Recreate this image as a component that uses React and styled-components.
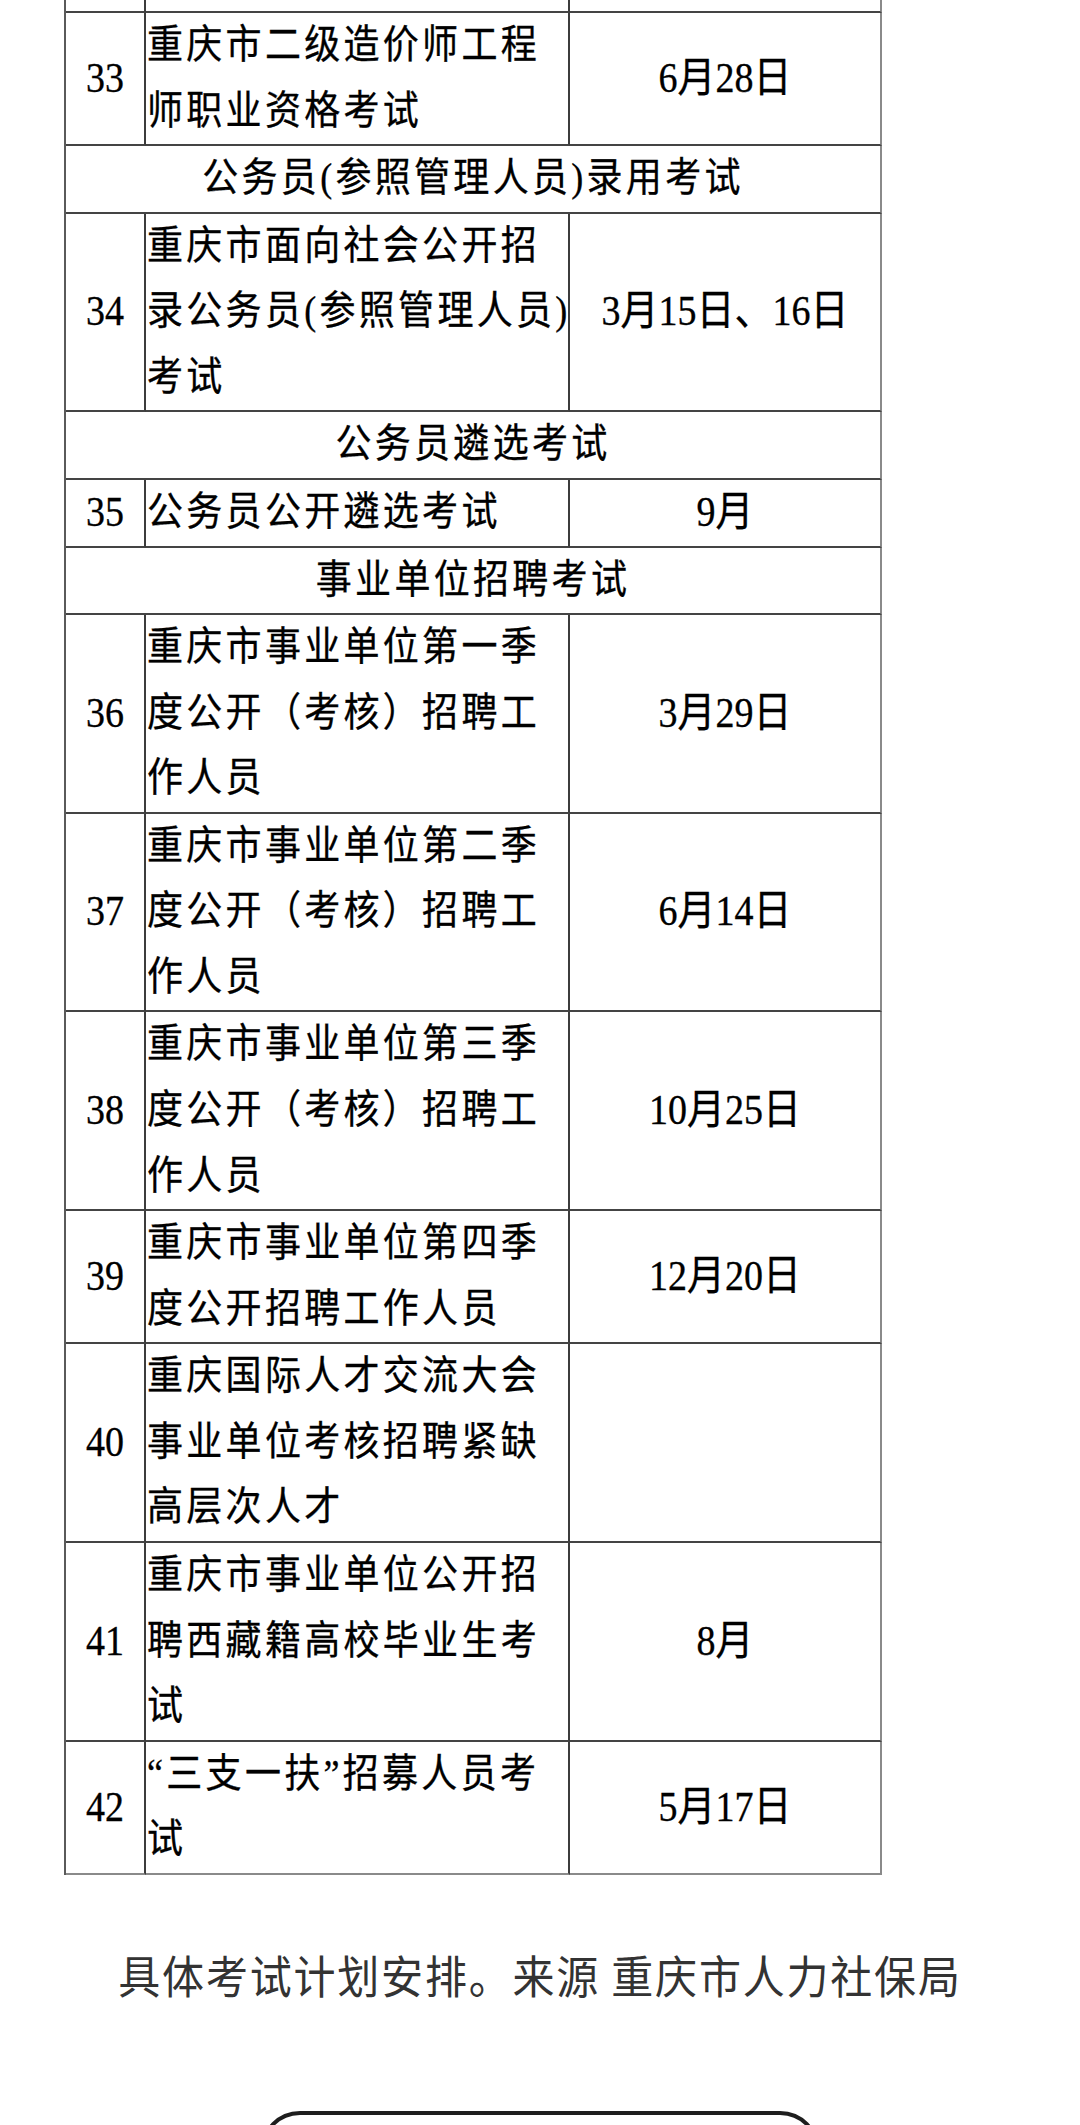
import React from "react";
import styled, { createGlobalStyle } from "styled-components";

const Global = createGlobalStyle`
  html, body { margin: 0; padding: 0; background: #ffffff; }
  body { font-family: "Liberation Serif", "Noto Sans CJK SC", serif; color: #000; }
`;

const Page = styled.div`
  width: 1080px;
`;

const TableWrap = styled.div`
  padding-left: 64px;
`;

const Table = styled.div`
  display: grid;
  grid-template-columns: 80px 424px 312px;
  width: 818px;
  border-left: 2px solid #5a5a5a;
  box-sizing: border-box;
`;

const LINE = 65.57;

const Cell = styled.div`
  box-sizing: border-box;
  display: flex;
  align-items: center;
  justify-content: ${(p) => (p.$align === "left" ? "flex-start" : "center")};
  border-right: 2px solid ${(p) => (p.$outer ? "#8a8a8a" : "#3c3c3c")};
  border-bottom: 2px solid ${(p) => (p.$bottom ? "#8a8a8a" : "#444")};
  height: ${(p) => p.$h}px;
  overflow: visible;
  font-size: ${(p) => (p.$align === "left" ? 36 : 38)}px;
  letter-spacing: ${(p) => (p.$align === "left" ? 3.3 : 0)}px;
  line-height: ${LINE}px;
  padding-left: ${(p) => (p.$align === "left" ? 1 : 0)}px;
`;

const HeadCell = styled.div`
  grid-column: 1 / -1;
  box-sizing: border-box;
  display: flex;
  align-items: center;
  justify-content: center;
  height: ${LINE + 2}px;
  border-right: 2px solid #8a8a8a;
  border-bottom: 2px solid #444;
  font-size: 36px;
  letter-spacing: 3.3px;
  line-height: ${LINE}px;
`;

const Text = styled.span`
  display: inline-block;
  transform: scaleY(1.1);
  -webkit-text-stroke: 0.3px #000;
`;

const Lines = styled.div`
  display: flex;
  flex-direction: column;
`;

const Line = styled.div`
  white-space: nowrap;
  transform: scaleY(1.1);
  -webkit-text-stroke: 0.3px #000;
`;

const Caption = styled.p`
  margin: 70px 0 0;
  text-align: center;
  font-family: "Noto Sans CJK SC", "Liberation Sans", sans-serif;
  font-size: 42px;
  letter-spacing: 1.8px;
  line-height: 60px;
  color: #333333;
  transform: scaleY(1.08);
`;

const OutlineButton = styled.div`
  width: 560px;
  height: 120px;
  margin: 106px auto 0;
  box-sizing: border-box;
  border: 4px solid #1e1e1e;
  border-radius: 40px;
`;

const rows = [
  { n: 33, lines: ["重庆市二级造价师工程", "师职业资格考试"], date: "6月28日" },
  { heading: "公务员(参照管理人员)录用考试" },
  { n: 34, lines: ["重庆市面向社会公开招", "录公务员(参照管理人员)", "考试"], date: "3月15日、16日" },
  { heading: "公务员遴选考试" },
  { n: 35, lines: ["公务员公开遴选考试"], date: "9月" },
  { heading: "事业单位招聘考试" },
  { n: 36, lines: ["重庆市事业单位第一季", "度公开（考核）招聘工", "作人员"], date: "3月29日" },
  { n: 37, lines: ["重庆市事业单位第二季", "度公开（考核）招聘工", "作人员"], date: "6月14日" },
  { n: 38, lines: ["重庆市事业单位第三季", "度公开（考核）招聘工", "作人员"], date: "10月25日" },
  { n: 39, lines: ["重庆市事业单位第四季", "度公开招聘工作人员"], date: "12月20日" },
  { n: 40, lines: ["重庆国际人才交流大会", "事业单位考核招聘紧缺", "高层次人才"], date: "" },
  { n: 41, lines: ["重庆市事业单位公开招", "聘西藏籍高校毕业生考", "试"], date: "8月" },
  { n: 42, lines: ["“三支一扶”招募人员考", "试"], date: "5月17日" },
];

export default function App() {
  return (
    <>
      <Global />
      <Page>
        <TableWrap>
          <Table>
            <Cell $h={13} />
            <Cell $h={13} />
            <Cell $h={13} $outer />
            {rows.map((r, i) => {
              if (r.heading)
                return (
                  <HeadCell key={i}>
                    <Text>{r.heading}</Text>
                  </HeadCell>
                );
              const h = r.lines.length * LINE + 2;
              const last = i === rows.length - 1;
              return (
                <React.Fragment key={i}>
                  <Cell $h={h} $bottom={last}>
                    <Text>{r.n}</Text>
                  </Cell>
                  <Cell $h={h} $align="left" $bottom={last}>
                    <Lines>
                      {r.lines.map((l, j) => (
                        <Line key={j}>{l}</Line>
                      ))}
                    </Lines>
                  </Cell>
                  <Cell $h={h} $outer $bottom={last}>
                    {r.date && <Text>{r.date}</Text>}
                  </Cell>
                </React.Fragment>
              );
            })}
          </Table>
        </TableWrap>
        <Caption>具体考试计划安排。来源 重庆市人力社保局</Caption>
        <OutlineButton />
      </Page>
    </>
  );
}
